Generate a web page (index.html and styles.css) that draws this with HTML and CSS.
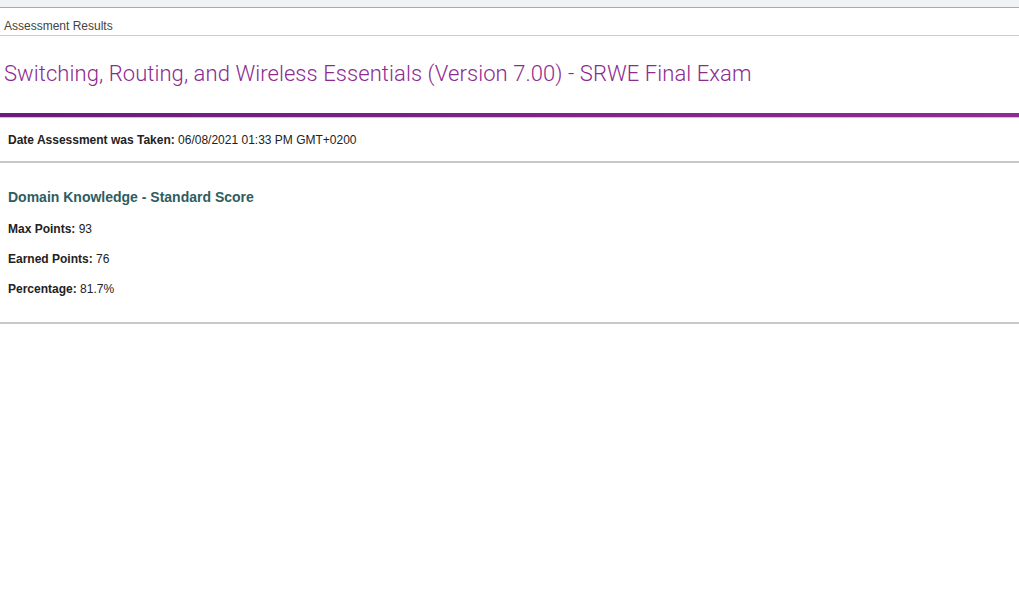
FILE: index.html
```html
<!DOCTYPE html>
<html>
<head>
<meta charset="utf-8">
<link rel="stylesheet" href="styles.css">
</head>
<body>
<div class="topbar"></div>
<div class="crumb">Assessment Results</div>
<h1 class="title">Switching, Routing, and Wireless Essentials (Version 7.00) - SRWE Final Exam</h1>
<div class="accent"></div>
<div class="date"><b>Date Assessment was Taken:</b> 06/08/2021 01:33 PM GMT+0200</div>
<div class="score">
  <h2 class="score-title">Domain Knowledge - Standard Score</h2>
  <p class="row"><b>Max Points:</b> 93</p>
  <p class="row"><b>Earned Points:</b> 76</p>
  <p class="row"><b>Percentage:</b> 81.7%</p>
</div>
</body>
</html>
```
FILE: styles.css
```css
html, body {
  margin: 0;
  padding: 0;
  background: #ffffff;
  font-family: "Liberation Sans", Arial, sans-serif;
  color: #222;
}
.topbar {
  height: 7px;
  background: #f1f2f3;
  border-bottom: 1px solid #a9a9a9;
}
.crumb {
  font-size: 12px;
  color: #444;
  padding: 11px 0 0 4px;
  height: 16px;
  border-bottom: 1px solid #cccccc;
}
.title {
  margin: 0;
  font-family: Roboto, sans-serif;
  font-weight: 300;
  font-size: 22px;
  letter-spacing: 0.07px;
  color: #8d2a8f;
  padding: 24px 0 0 4px;
  height: 53px;
  line-height: 28px;
}
.accent {
  height: 4px;
  background: linear-gradient(to right, #6a1b7d, #922a96);
  border-bottom: 1px solid #c8c8c8;
}
.date {
  font-size: 12px;
  padding: 15px 8px 0 8px;
  height: 28px;
  border-bottom: 2px solid #c8c8c8;
}
.score {
  padding: 26px 8px 0 8px;
  height: 133px;
  border-bottom: 2px solid #c8c8c8;
}
.score-title {
  margin: 0 0 17px 0;
  font-size: 14px;
  font-weight: bold;
  color: #2e5d60;
}
.row {
  margin: 0 0 16px 0;
  font-size: 12px;
  line-height: 14px;
}
```
